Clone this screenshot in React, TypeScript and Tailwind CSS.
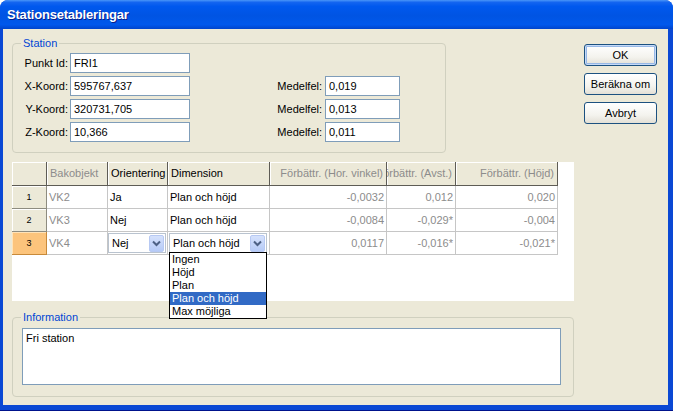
const rows = [
  { n: "1", obj: "VK2", ori: "Ja", dim: "Plan och höjd", hor: "-0,0032", avst: "0,012", hojd: "0,020", active: false },
  { n: "2", obj: "VK3", ori: "Nej", dim: "Plan och höjd", hor: "-0,0084", avst: "-0,029*", hojd: "-0,004", active: false },
  { n: "3", obj: "VK4", ori: "Nej", dim: "Plan och höjd", hor: "0,0117", avst: "-0,016*", hojd: "-0,021*", active: true },
]

const options = ["Ingen", "Höjd", "Plan", "Plan och höjd", "Max möjliga"]

function Input({ value, className }: { value: string; className: string }) {
  return (
    <div className={`h-[20px] border border-[#7F9DB9] bg-white pl-[3px] flex items-center text-black ${className}`}>
      {value}
    </div>
  )
}

function Btn({ label, def }: { label: string; def?: boolean }) {
  return (
    <button
      className={`w-[73px] h-[22px] rounded-[3px] border border-[#1C5180] bg-[linear-gradient(180deg,#FFFFFF_0%,#F4F3EE_60%,#E3E0D6_100%)] text-[11px] text-black ${
        def ? "shadow-[inset_0_0_0_1px_#C6DAF8,inset_0_0_0_2px_#97B8E6]" : ""
      }`}
    >
      {label}
    </button>
  )
}

function HeadCell({ w, children, gray, right }: { w: string; children: string; gray?: boolean; right?: boolean }) {
  return (
    <div
      className={`${w} shrink-0 flex items-center overflow-hidden whitespace-nowrap bg-[#ECE9D8] border-r border-b border-[#5E5C55] shadow-[inset_1px_1px_0_#fff] ${
        right ? "justify-end pr-[3px]" : "pl-[3px]"
      } ${gray ? "text-[#8C8C8C]" : "text-black"}`}
    >
      <span className="shrink-0">{children}</span>
    </div>
  )
}

function Chevron() {
  return (
    <div className="w-[15px] h-[17px] rounded-[2px] border border-[#B7C9F3] bg-[linear-gradient(180deg,#D5E1FC,#B6CBF7)] flex items-center justify-center">
      <svg width="9" height="7" viewBox="0 0 9 7">
        <polyline points="1,1.5 4.5,5 8,1.5" fill="none" stroke="#4D6185" strokeWidth="2" />
      </svg>
    </div>
  )
}

function Combo({ value, className }: { value: string; className: string }) {
  return (
    <div className={`h-[20px] border border-[#B9C3CF] bg-white flex items-center justify-between pl-[3px] pr-[1px] text-black ${className}`}>
      <span>{value}</span>
      <Chevron />
    </div>
  )
}

export default function App() {
  return (
    <div className="w-[673px] h-[411px] bg-white font-['Liberation_Sans',Arial,sans-serif] text-[11px] leading-[13px]">
      <div className="w-full h-full rounded-t-[8px] overflow-hidden flex flex-col bg-[#0A48D4]">
        <div className="h-[29px] shrink-0 bg-[linear-gradient(180deg,#4A96F8_0%,#1465F0_8%,#0058EE_22%,#0054E3_55%,#0058EC_85%,#0044CC_100%)] flex items-center pl-[7px]">
          <span className="text-white font-bold text-[13px] tracking-[-0.2px] [text-shadow:1px_1px_0_#0A1E8A]">Stationsetableringar</span>
        </div>
        <div className="flex-1 pl-[3px] pr-[5px] pb-[5px] border-b border-[#00138C]">
          <div className="h-full bg-[#ECE9D8] flex">
            {/* left column */}
            <div className="pl-[9px] pt-[8px] w-[571px] shrink-0">
              <fieldset className="w-[434px] border border-[#D0D0BF] rounded-[4px] pb-[10px]">
                <legend className="ml-[8px] px-[2px] text-[#0046D5]">Station</legend>
                <div className="pt-[3px] flex flex-col gap-[3px]">
                  <div className="flex items-center">
                    <span className="w-[55px] text-right">Punkt Id:</span>
                    <Input value="FRI1" className="ml-[2px] w-[120px]" />
                  </div>
                  {[
                    ["X-Koord:", "595767,637", "0,019"],
                    ["Y-Koord:", "320731,705", "0,013"],
                    ["Z-Koord:", "10,366", "0,011"],
                  ].map(([label, v, m]) => (
                    <div key={label} className="flex items-center">
                      <span className="w-[55px] text-right">{label}</span>
                      <Input value={v} className="ml-[2px] w-[120px]" />
                      <span className="w-[132px] text-right">Medelfel:</span>
                      <Input value={m} className="ml-[3px] w-[75px]" />
                    </div>
                  ))}
                </div>
              </fieldset>

              {/* grid */}
              <div className="relative mt-[9px] w-[562px] h-[139px] bg-white z-10">
                <div className="flex h-[24px]">
                  <div className="w-[35px] shrink-0 bg-[#ECE9D8] border-r border-b border-[#5E5C55] shadow-[inset_1px_1px_0_#fff]" />
                  <HeadCell w="w-[61px]" gray>Bakobjekt</HeadCell>
                  <HeadCell w="w-[60px]">Orientering</HeadCell>
                  <HeadCell w="w-[102px]">Dimension</HeadCell>
                  <HeadCell w="w-[117px]" gray right>Förbättr. (Hor. vinkel)</HeadCell>
                  <HeadCell w="w-[69px]" gray right>Förbättr. (Avst.)</HeadCell>
                  <HeadCell w="w-[102px]" gray right>Förbättr. (Höjd)</HeadCell>
                </div>
                {rows.map((r) => (
                  <div key={r.n} className="flex h-[23px]">
                    <div
                      className={`w-[35px] shrink-0 flex items-center justify-center text-[9px] border-r border-b ${
                        r.active
                          ? "bg-[#FCC47C] border-[#C88A3A] shadow-[inset_1px_1px_0_#FFE3B8]"
                          : "bg-[#ECE9D8] border-[#8E8C80] shadow-[inset_1px_1px_0_#fff]"
                      }`}
                    >
                      {r.n}
                    </div>
                    <div className="w-[61px] shrink-0 flex items-center pl-[2px] text-[#8C8C8C] border-r border-b border-[#C6C6C6]">{r.obj}</div>
                    {r.active ? (
                      <>
                        <div className="w-[60px] shrink-0 pt-[1px] border-r border-b border-[#C6C6C6]">
                          <Combo value={r.ori} className="w-[58px]" />
                        </div>
                        <div className="w-[102px] shrink-0 pt-[1px] pl-[1px] border-r border-b border-[#C6C6C6]">
                          <Combo value={r.dim} className="w-[98px]" />
                        </div>
                      </>
                    ) : (
                      <>
                        <div className="w-[60px] shrink-0 flex items-center pl-[2px] border-r border-b border-[#C6C6C6]">{r.ori}</div>
                        <div className="w-[102px] shrink-0 flex items-center pl-[2px] border-r border-b border-[#C6C6C6]">{r.dim}</div>
                      </>
                    )}
                    <div className="w-[117px] shrink-0 flex items-center justify-end pr-[2px] text-[#8C8C8C] border-r border-b border-[#C6C6C6]">{r.hor}</div>
                    <div className="w-[69px] shrink-0 flex items-center justify-end pr-[2px] text-[#8C8C8C] border-r border-b border-[#C6C6C6]">{r.avst}</div>
                    <div className="w-[102px] shrink-0 flex items-center justify-end pr-[2px] text-[#8C8C8C] border-r border-b border-[#C6C6C6]">{r.hojd}</div>
                  </div>
                ))}

                {/* open dropdown list */}
                <div className="absolute left-[157px] top-[90px] w-[98px] border border-black bg-white">
                  {options.map((o) => (
                    <div
                      key={o}
                      className={`h-[13px] pl-[2px] flex items-center ${o === "Plan och höjd" ? "bg-[#316AC5] text-white" : "text-black"}`}
                    >
                      {o}
                    </div>
                  ))}
                </div>
              </div>

              <fieldset className="mt-[10px] w-[562px] border border-[#D0D0BF] rounded-[4px] pl-[9px] pb-[11px]">
                <legend className="ml-[-1px] px-[2px] text-[#0046D5]">Information</legend>
                <div className="mt-[4px] w-[539px] h-[57px] border border-[#7F9DB9] bg-white pl-[3px] pt-[3px]">Fri station</div>
              </fieldset>
            </div>

            {/* right column */}
            <div className="pl-[10px] pt-[15px] flex flex-col gap-[7px]">
              <Btn label="OK" def />
              <Btn label="Beräkna om" />
              <Btn label="Avbryt" />
            </div>
          </div>
        </div>
      </div>
    </div>
  )
}
